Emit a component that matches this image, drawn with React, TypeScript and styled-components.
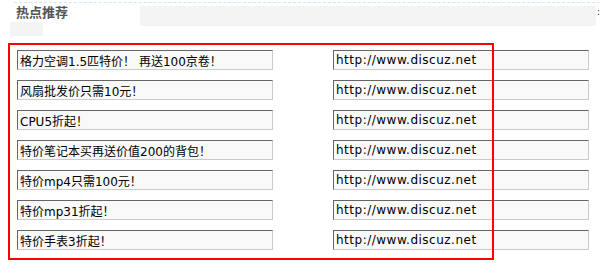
import React from "react";
import styled, { createGlobalStyle } from "styled-components";

const links = [
  "格力空调1.5匹特价！ 再送100京卷！",
  "风扇批发价只需10元！",
  "CPU5折起！",
  "特价笔记本买再送价值200的背包！",
  "特价mp4只需100元！",
  "特价mp31折起！",
  "特价手表3折起！",
];

const GlobalStyle = createGlobalStyle`
  html, body {
    margin: 0;
    padding: 0;
    background: #fff;
    overflow: hidden;
  }
  body {
    font-family: "DejaVu Sans", "Noto Sans CJK SC", sans-serif;
    font-size: 12px;
  }
`;

const Page = styled.div`
  width: 600px;
  height: 263px;
  padding-top: 2px;
  box-sizing: border-box;
  position: relative;
  overflow: hidden;
`;

const DashedRule = styled.div`
  margin-left: 14px;
  border-top: 1px dashed #d3e8f6;
`;

const Header = styled.div`
  display: flex;
  align-items: flex-start;
`;

const TitleColumn = styled.div`
  display: flex;
  flex-direction: column;
  padding-left: 10px;
  width: 131px;
`;

const Title = styled.h2`
  margin: 1px 0 0 6px;
  font-family: "Noto Sans CJK SC", sans-serif;
  font-size: 13px;
  line-height: 16px;
  font-weight: bold;
  color: #555;
`;

const Stub = styled.div`
  margin-top: 2px;
  width: 33px;
  height: 14px;
  background: #f4f4f4;
`;

const GreyBar = styled.div`
  margin-top: 3px;
  width: 457px;
  height: 20px;
  background: #f4f4f4;
`;

const Colon = styled.span`
  margin: 3px 0 0 1px;
  font-size: 10px;
  line-height: 12px;
  color: #333;
`;

const Form = styled.div`
  display: grid;
  grid-template-columns: 256px 256px;
  grid-auto-rows: 20px;
  column-gap: 60px;
  row-gap: 10px;
  margin: 14px 0 0 17px;
`;

const Field = styled.input<{ $url?: boolean }>`
  box-sizing: border-box;
  width: 256px;
  height: 20px;
  margin: 0;
  padding: 0 2px;
  border: 1px solid;
  border-color: #666 #cbcbcb #cbcbcb #666;
  background: #f9f9f9;
  color: #000;
  font-family: "DejaVu Sans", "Noto Sans CJK SC", sans-serif;
  font-size: 12px;
  letter-spacing: ${({ $url }) => ($url ? "0.5px" : "0")};
  outline: none;
`;

const Highlight = styled.div`
  position: absolute;
  left: 8px;
  top: 43px;
  width: 486px;
  height: 217px;
  box-sizing: border-box;
  border: 2px solid #ff0000;
  pointer-events: none;
`;

export default function App() {
  return (
    <>
      <GlobalStyle />
      <Page>
        <DashedRule />
        <Header>
          <TitleColumn>
            <Title>热点推荐</Title>
            <Stub />
          </TitleColumn>
          <GreyBar />
          <Colon>:</Colon>
        </Header>
        <Form>
          {links.map((text) => (
            <React.Fragment key={text}>
              <Field readOnly defaultValue={text} />
              <Field $url readOnly defaultValue="http://www.discuz.net" />
            </React.Fragment>
          ))}
        </Form>
        <Highlight />
      </Page>
    </>
  );
}
